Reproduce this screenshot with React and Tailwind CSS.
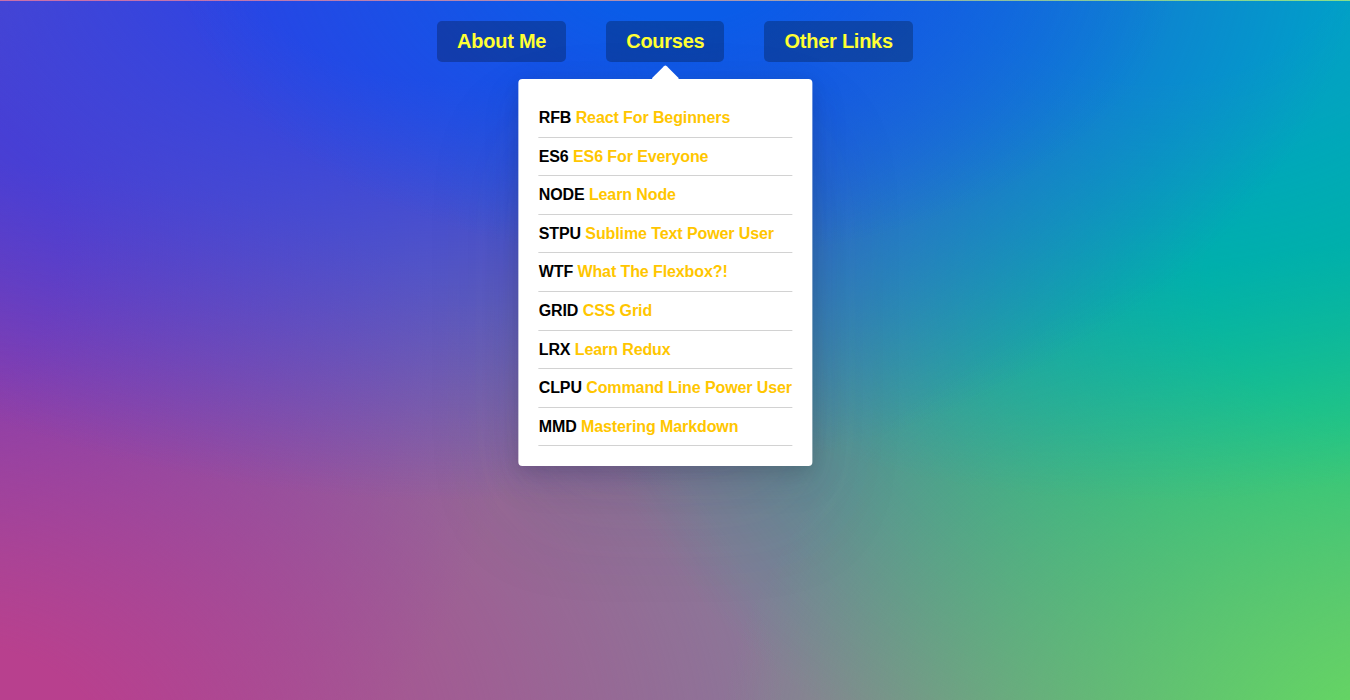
import React from "react";

const courses = [
  ["RFB", "React For Beginners"],
  ["ES6", "ES6 For Everyone"],
  ["NODE", "Learn Node"],
  ["STPU", "Sublime Text Power User"],
  ["WTF", "What The Flexbox?!"],
  ["GRID", "CSS Grid"],
  ["LRX", "Learn Redux"],
  ["CLPU", "Command Line Power User"],
  ["MMD", "Mastering Markdown"],
];

export default function App() {
  return (
    <div
      className="relative h-[700px] w-full overflow-hidden border-t border-white/25 bg-[#8a7898] bg-[radial-gradient(500px_300px_at_680px_-40px,rgba(10,92,232,1)_20%,rgba(10,92,232,0)_100%),radial-gradient(900px_560px_at_460px_-60px,rgba(44,66,228,1)_25%,rgba(44,66,228,0)_100%),radial-gradient(800px_560px_at_1150px_-60px,rgba(0,160,200,1)_25%,rgba(0,160,200,0)_100%),radial-gradient(700px_520px_at_1420px_760px,rgba(100,212,100,1)_15%,rgba(100,212,100,0)_100%),radial-gradient(850px_600px_at_1420px_280px,rgba(0,194,138,1)_25%,rgba(0,194,138,0)_100%),radial-gradient(850px_600px_at_-60px_760px,rgba(184,64,142,1)_20%,rgba(184,64,142,0)_100%),radial-gradient(600px_700px_at_-60px_250px,rgba(100,60,196,1)_20%,rgba(100,60,196,0)_100%)]"
      style={{ fontFamily: '"Liberation Sans", Arial, sans-serif' }}
    >
      <nav className="relative flex justify-center">
        <ul className="flex">
          <li className="relative flex justify-center">
            <a className="m-5 block rounded-[5px] bg-black/25 px-5 py-[10px] text-[20px] font-bold leading-[21px] tracking-[-0.25px] text-[#ffff33]">
              About Me
            </a>
          </li>
          <li className="relative flex justify-center">
            <a className="m-5 block rounded-[5px] bg-black/25 px-5 py-[10px] text-[20px] font-bold leading-[21px] tracking-[-0.25px] text-[#ffff33]">
              Courses
            </a>
            <div className="absolute left-1/2 top-[78px] -translate-x-1/2 rounded-[4px] bg-white px-5 pb-5 pt-5 shadow-[0_50px_100px_rgba(50,50,93,0.1),0_15px_35px_rgba(50,50,93,0.15),0_5px_15px_rgba(0,0,0,0.1)]">
              <span className="absolute left-1/2 top-[-10px] h-5 w-5 -translate-x-1/2 rotate-45 rounded-[2px] bg-white" />
              <ul className="relative whitespace-nowrap">
                {courses.map(([code, name]) => (
                  <li
                    key={code}
                    className="border-b border-[#d2d2d2] py-[10px] text-[16px] font-bold leading-[17.6px] tracking-[-0.1px]"
                  >
                    <span className="text-black">{code}</span>{" "}
                    <span className="text-[#ffc600]">{name}</span>
                  </li>
                ))}
              </ul>
            </div>
          </li>
          <li className="relative flex justify-center">
            <a className="m-5 block rounded-[5px] bg-black/25 px-5 py-[10px] text-[20px] font-bold leading-[21px] tracking-[-0.25px] text-[#ffff33]">
              Other Links
            </a>
          </li>
        </ul>
      </nav>
    </div>
  );
}
